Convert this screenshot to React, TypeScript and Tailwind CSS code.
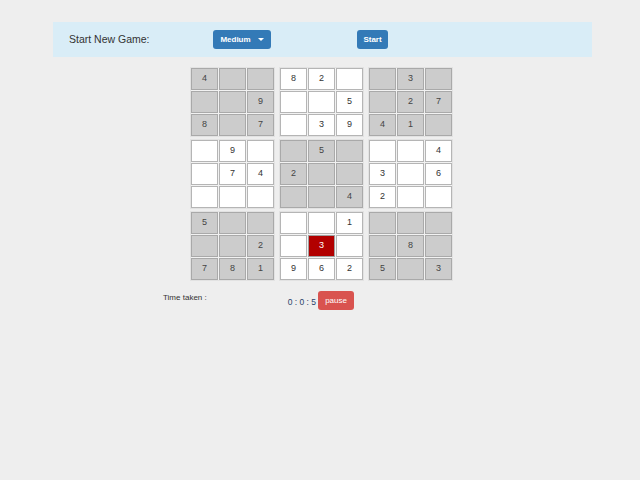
const boxes: (string | null)[][] = [
  ['4', null, null, null, null, '9', '8', null, '7'],
  ['8', '2', null, null, null, '5', null, '3', '9'],
  [null, '3', null, null, '2', '7', '4', '1', null],
  [null, '9', null, null, '7', '4', null, null, null],
  [null, '5', null, '2', null, null, null, null, '4'],
  [null, null, '4', '3', null, '6', '2', null, null],
  ['5', null, null, null, null, '2', '7', '8', '1'],
  [null, null, '1', null, '3', null, '9', '6', '2'],
  [null, null, null, null, '8', null, '5', null, '3'],
];

export default function App() {
  return (
    <div className="min-h-[480px] bg-[#eeeeee] pt-[22px] font-['Liberation_Sans',Arial,sans-serif] text-[#333]">
      <div className="ml-[53px] flex h-[35px] w-[539px] items-center bg-[#d9edf7] pl-[16px]">
        <span className="w-[144px] text-[10.5px] text-[#333]">Start New Game:</span>
        <button className="flex h-[19px] w-[58px] items-center justify-center gap-[7px] rounded-[3px] bg-[#337ab7] text-[8px] font-bold text-white">
          <span>Medium</span>
          <span className="h-0 w-0 border-x-[3px] border-t-[3px] border-x-transparent border-t-white" />
        </button>
        <button className="ml-[86px] h-[19px] w-[31px] rounded-[3px] bg-[#337ab7] text-[8px] font-bold text-white">
          Start
        </button>
      </div>

      <div className="ml-[190px] mt-[10px] grid w-[263px] grid-cols-[85px_85px_85px] gap-x-[4px] gap-y-[2px]">
        {boxes.map((box, b) => {
          const gray = b % 2 === 0;
          return (
            <div key={b} className="grid grid-cols-[27px_27px_27px] gap-px border border-[#e2e2e2] bg-[#f2f2f2]">
              {box.map((v, i) => {
                const red = b === 7 && i === 4;
                return (
                  <div
                    key={i}
                    className={`flex h-[22px] items-center justify-center border text-[9px] ${
                      red
                        ? 'border-[#a0a0a0] bg-[#b20000] text-white'
                        : gray
                          ? 'border-[#a9a9a9] bg-[#cccccc] text-[#444]'
                          : 'border-[#b5b5b5] bg-white text-[#333]'
                    }`}
                  >
                    {v}
                  </div>
                );
              })}
            </div>
          );
        })}
      </div>

      <div className="mt-[10px] flex items-start">
        <span className="ml-[163px] mt-[1px] text-[8px] text-[#333]">Time taken :</span>
        <span className="ml-[81px] mt-[5px] text-[8.5px] text-[#2a3f6a]">0 : 0 : 5</span>
        <button className="ml-[2px] h-[19px] w-[36px] rounded-[3px] bg-[#d9534f] text-[8px] text-white">
          pause
        </button>
      </div>
    </div>
  );
}
